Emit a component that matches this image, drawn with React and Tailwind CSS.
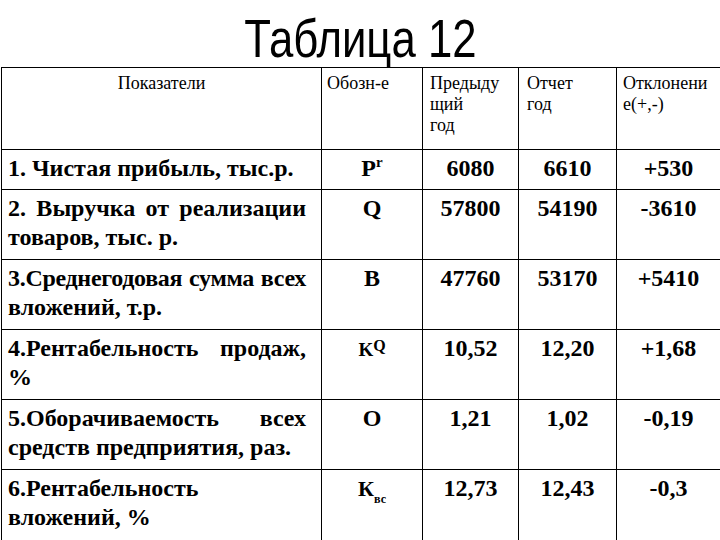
const rows = [
  {
    lines: ['1. Чистая прибыль, тыс.р.'],
    sym: <>P<sup className="text-[15px] font-bold -top-[9px]">r</sup></>,
    prev: '6080', cur: '6610', diff: '+530', h: 'h-[40px]',
  },
  { lines: ['2. Выручка от реализации', 'товаров, тыс. р.'], sym: 'Q', prev: '57800', cur: '54190', diff: '-3610', h: 'h-[70px]' },
  { lines: ['3.Среднегодовая сумма всех', 'вложений, т.р.'], tight: true, sym: 'B', prev: '47760', cur: '53170', diff: '+5410', h: 'h-[70px]' },
  {
    lines: ['4.Рентабельность продаж,', '%'],
    sym: <><span className="text-[19px]">K</span><sup className="text-[16px] font-bold -top-[5px]">Q</sup></>,
    prev: '10,52', cur: '12,20', diff: '+1,68', h: 'h-[70px]',
  },
  { lines: ['5.Оборачиваемость всех', 'средств предприятия, раз.'], sym: 'O', prev: '1,21', cur: '1,02', diff: '-0,19', h: 'h-[70px]' },
  {
    lines: ['6.Рентабельность', 'вложений, %'],
    sym: <><span className="text-[22px]">К</span><sub className="text-[12px] -bottom-[7px]">вс</sub></>,
    prev: '12,73', cur: '12,43', diff: '-0,3', h: 'h-[80px]',
  },
];

const cell = "border-r border-b border-black font-['Liberation_Serif','Times_New_Roman',serif]";
const head = 'h-[82px] pt-[5px] text-[18px] leading-[21px]';
const data = 'pt-[4px] text-[24px] leading-[29px] font-bold';

export default function App() {
  return (
    <div className="w-[720px] h-[540px] overflow-hidden bg-white text-black">
      <div className="h-[67px] pt-[11px] text-center">
        <div className="inline-block font-['Liberation_Sans',Arial,sans-serif] text-[54px] leading-[54px] scale-x-[0.81]">
          Таблица 12
        </div>
      </div>

      <div className="ml-[1px] w-[720px] grid grid-cols-[320px_101px_96px_98px_104px] border-l border-t border-black">
        <div className={`${cell} ${head} px-[6px] text-center`}>Показатели</div>
        <div className={`${cell} ${head} px-[5px]`}>Обозн-е</div>
        <div className={`${cell} ${head} px-[7px]`}>
          Предыду<br />щий<br />год
        </div>
        <div className={`${cell} ${head} px-[8px]`}>
          Отчет<br />год
        </div>
        <div className={`${cell} ${head} px-[6px]`}>
          Отклонени<br />е(+,-)
        </div>

        {rows.map((r, i) => (
          <div key={i} className="contents">
            <div className={`${cell} ${r.h} ${data} pl-[6px] pr-[15px]`}>
              {r.lines.map((line, j) => (
                <div
                  key={j}
                  className={
                    j < r.lines.length - 1
                      ? `whitespace-nowrap text-justify [text-align-last:justify] ${r.tight ? 'tracking-[-0.3px]' : ''}`
                      : 'whitespace-nowrap'
                  }
                >
                  {line}
                </div>
              ))}
            </div>
            <div className={`${cell} ${r.h} ${data} text-center`}>{r.sym}</div>
            <div className={`${cell} ${r.h} ${data} text-center`}>{r.prev}</div>
            <div className={`${cell} ${r.h} ${data} text-center`}>{r.cur}</div>
            <div className={`${cell} ${r.h} ${data} text-center`}>{r.diff}</div>
          </div>
        ))}
      </div>
    </div>
  );
}
